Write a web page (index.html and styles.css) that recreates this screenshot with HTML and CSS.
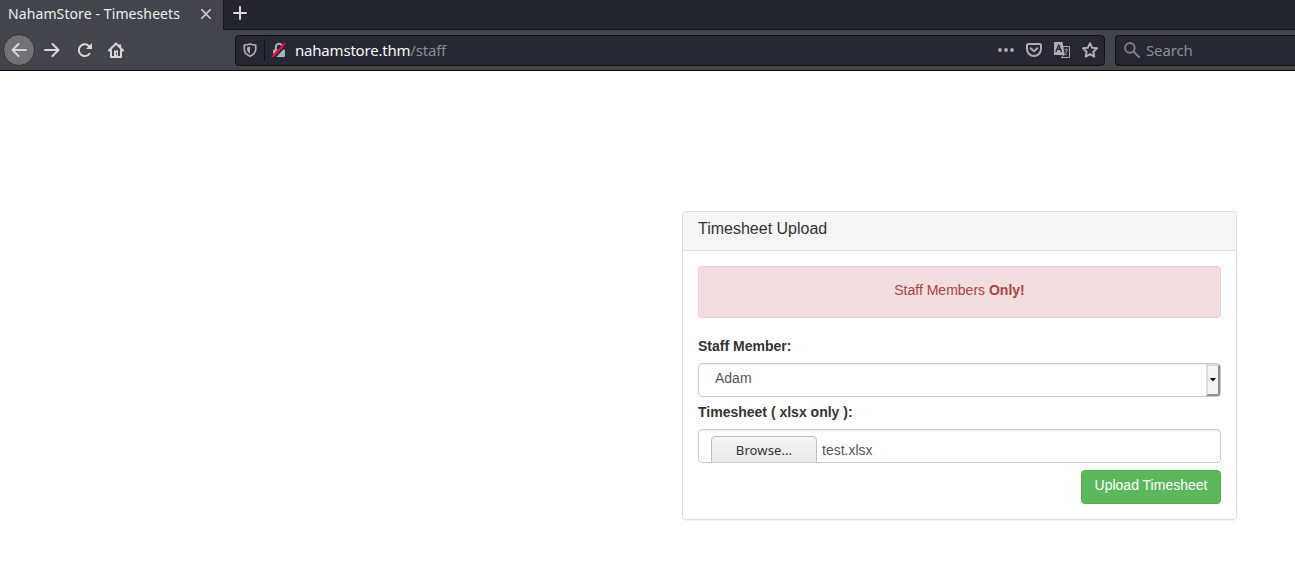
FILE: index.html
```html
<!DOCTYPE html>
<html lang="en">
<head>
<meta charset="utf-8">
<title>NahamStore - Timesheets</title>
<link rel="stylesheet" href="styles.css">
</head>
<body>
<header class="browser">
  <div class="tabs">
    <div class="tab"><span class="tab-title">NahamStore - Timesheets</span>
      <svg class="tab-close" width="12" height="12" viewBox="0 0 12 12"><path d="M1.300 1.300l9.400 9.400M10.700 1.300l-9.400 9.400"/></svg>
    </div>
    <div class="tab-rest"><svg class="line" width="16" height="16" viewBox="0 0 16 16"><path d="M8 2v12M2 8h12"/></svg></div>
  </div>
  <nav class="toolbar">
    <div class="back"><svg class="line" width="16" height="16" viewBox="0 0 16 16"><path d="M15 8H1.500M7.500 2L1.500 8l6 6"/></svg></div>
    <svg class="line forward" width="16" height="16" viewBox="0 0 16 16"><path d="M1 8h13.500M8.500 2l6 6-6 6"/></svg>
    <svg class="line reload" width="16" height="16" viewBox="0 0 16 16"><path d="M12.600 11.500A5.900 5.900 0 1 1 12 4"/><path class="solid" d="M15 1v6H9z"/></svg>
    <svg class="line home" width="16" height="16" viewBox="0 0 16 16"><path d="M1 8.500l7-7 7 7M3 7.500V15h10V7.500"/><path class="solid" d="M6 15V8.500h4V15zM11 2.500h2.200v4L11 4.500z"/><path class="hole" d="M8.500 11v1.500"/></svg>
    <div class="field url">
      <svg class="shield" width="14" height="14" viewBox="0 0 14 14"><path d="M7 1Q9.500 2 12.700 2V6.500Q12.500 11 7 13.200 1.500 11 1.300 6.500V2Q4.500 2 7 1z"/><path class="fill" d="M7 3.500v7.200Q4.200 9.500 4 6.500V4.200Q5.700 4.200 7 3.500z"/></svg>
      <span class="divider"></span>
      <svg class="lock" width="16" height="16" viewBox="0 0 16 16"><path class="shackle" d="M4.800 8V5a3.200 3.200 0 0 1 6.400 0v3"/><rect class="fill" x="2" y="7.500" width="12" height="7.500" rx="1"/><path class="gap" d="M3.300 15.500L15.300 3"/><path class="slash" d="M1.500 14.500L13.800 1.500"/></svg>
      <span class="address">nahamstore.thm<span class="path">/staff</span></span>
      <div class="actions">
        <svg width="16" height="16" viewBox="0 0 16 16"><g class="fill"><circle cx="2" cy="8" r="1.900"/><circle cx="8" cy="8" r="1.900"/><circle cx="14" cy="8" r="1.900"/></g></svg>
        <svg width="16" height="16" viewBox="0 0 16 16"><path d="M2.500 2h11q1.500 0 1.500 1.500V7A7 7 0 0 1 1 7V3.500Q1 2 2.500 2z"/><path d="M4.700 6.200L8 9.400l3.300-3.200"/></svg>
        <svg width="16" height="16" viewBox="0 0 16 16"><path class="fill" d="M0 0h8.500l2.300 13H0z"/><path class="letter" d="M2 9.500L4.700 3 7.400 9.500M3 7.200h3.500"/><path class="thin" d="M9.500 4.500h6v11H7.500l2.500-3"/><path class="thin" d="M11 7.500q2-1.200 2.500.3 0 1-1.400 1.900v1M12 12v.8"/></svg>
        <svg width="16" height="16" viewBox="0 0 16 16"><path d="M8 1.200l2.100 4.500 4.900.6-3.600 3.400.9 4.900L8 12.200l-4.300 2.400.9-4.900L1 6.300l4.900-.6z"/></svg>
      </div>
    </div>
    <div class="field search">
      <svg width="16" height="16" viewBox="0 0 16 16"><circle cx="5.900" cy="5.900" r="4.800"/><path d="M9.500 9.500l5.500 5.500"/></svg>
      <span>Search</span>
    </div>
  </nav>
</header>
<main class="page">
  <section class="panel">
    <div class="panel-heading">Timesheet Upload</div>
    <form class="panel-body">
      <div class="alert"><span>Staff Members <b>Only!</b></span></div>
      <label class="label">Staff Member:</label>
      <div class="control select"><span>Adam</span><i class="arrow"><svg width="6" height="4" viewBox="0 0 6 4"><path d="M0 0h6L3 3.500z"/></svg></i></div>
      <label class="label">Timesheet ( xlsx only ):</label>
      <div class="control file"><span class="browse">Browse...</span><span class="filename">test.xlsx</span></div>
      <button class="submit" type="button">Upload Timesheet</button>
    </form>
  </section>
</main>
</body>
</html>
```
FILE: styles.css
```css
* { box-sizing: border-box; }
body { margin: 0; height: 581px; overflow: hidden; background: #fff; color: #333; font: 14px/20px "Liberation Sans", Arial, sans-serif; }
svg { flex: none; fill: none; display: block; }

.browser { height: 71px; background: #42454c; border-bottom: 1px solid #0c0c0d; font-family: "Noto Sans", sans-serif; overflow: hidden; }
.tabs { display: flex; height: 30px; }
.tab { width: 223px; display: flex; align-items: center; padding: 0 11px 2px 8px; color: #eee; font-size: 14px; letter-spacing: .1px; justify-content: space-between; }
.tab-title { white-space: nowrap; }
.tab-close { stroke: #d5d5d5; stroke-width: 1.6; }
.tab-rest { flex: 1; background: #22252e; border-left: 1px solid #15171d; border-bottom: 1px solid #15171d; padding: 5px 8px; }
.line { stroke: #d7d7d8; stroke-width: 2; stroke-linecap: round; stroke-linejoin: round; }
.solid { fill: #d7d7d8; stroke: none; }
.hole { stroke: #42454c; stroke-width: 1; }
.toolbar { display: flex; height: 40px; align-items: center; padding-left: 3px; }
.back { flex: none; width: 32px; height: 32px; border-radius: 50%; background: #717276; border: 1px solid #2f3137; display: flex; align-items: center; justify-content: center; }
.forward { margin-left: 9px; }
.reload { margin-left: 17px; }
.home { margin-left: 15px; }
.field { flex: none; height: 31px; background: #262833; border: 1px solid #101116; border-radius: 4px; display: flex; align-items: center; }
.field svg { stroke: #adaeb2; stroke-width: 2; stroke-linecap: round; stroke-linejoin: round; }
.field .fill { fill: #adaeb2; stroke: none; }
.url { width: 870px; margin-left: 111px; padding: 0 6px 0 7px; }
.divider { width: 1px; height: 22px; background: #101116; margin: 0 6px 0 7px; }
.url .shield { stroke-width: 1.7; }
.lock .gap { stroke: #262833; stroke-width: 2; }
.lock .slash { stroke: #f5003d; stroke-width: 2; }
.address { margin-left: 8px; color: #f9f9fa; font-size: 15px; letter-spacing: -.2px; }
.address .path { color: #8b8c92; }
.actions { display: flex; gap: 12px; margin-left: auto; }
.actions .letter { stroke: #262833; stroke-width: 1.4; }
.actions .thin { stroke-width: 1; }
.search { width: 180px; margin-left: 10px; padding-left: 8px; gap: 6px; color: #8d8e94; font-size: 15px; letter-spacing: -.15px; border-right: 0; border-radius: 4px 0 0 4px; }
.field.search svg { stroke: #7d7e85; }

.page { padding: 140px 58px 0 682px; }
.panel { border: 1px solid #ddd; border-radius: 4px; box-shadow: 0 1px 1px rgba(0,0,0,.05); }
.panel-heading { height: 39px; padding: 7px 15px 0; background: #f5f5f5; border-bottom: 1px solid #ddd; border-radius: 3px 3px 0 0; font-size: 16px; }
.panel-body { padding: 15px; display: flex; flex-direction: column; }
.alert { height: 52px; margin-bottom: 20px; padding-top: 13px; text-align: center; color: #a94442; background: #f2dede; border: 1px solid #ebccd1; border-radius: 4px; }
.label { height: 20px; margin-bottom: 5px; line-height: 17px; font-weight: bold; }
.control { height: 34px; margin-bottom: 7px; border: 1px solid #ccc; border-radius: 4px; color: #555; box-shadow: inset 0 1px 1px rgba(0,0,0,.075); display: flex; overflow: hidden; }
.select { padding: 0 0 0 16px; justify-content: space-between; line-height: 28px; }
.arrow { width: 14px; background: #f4f3f2; border: 2px solid #ddd; border-right-color: #8d8d8d; border-bottom-color: #8d8d8d; display: flex; align-items: center; justify-content: center; }
.arrow path { fill: #000; }
.file { padding: 6px 12px 0; gap: 5px; }
.browse { flex: none; width: 106px; height: 30px; border: 1px solid #c2beba; border-radius: 4px; background: linear-gradient(#f7f6f5, #e9e8e7 26px); color: #2e3436; text-align: center; font: 13px/27px "Noto Sans", sans-serif; letter-spacing: .1px; }
.filename { line-height: 29px; }
.submit { align-self: flex-end; width: 140px; height: 34px; padding: 0 0 4px; color: #fff; background: #5cb85c; border: 1px solid #4cae4c; border-radius: 4px; font: 14px/20px "Liberation Sans", Arial, sans-serif; }
```
